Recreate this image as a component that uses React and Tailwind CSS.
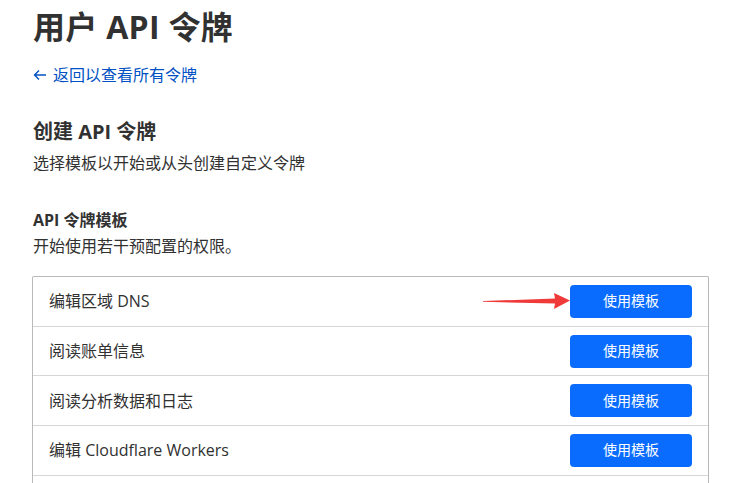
import React from "react";

const rows = ["编辑区域 DNS", "阅读账单信息", "阅读分析数据和日志", "编辑 Cloudflare Workers"];

export default function App() {
  return (
    <div
      className="w-[746px] h-[483px] overflow-hidden bg-white text-[#313131]"
      style={{ fontFamily: '"Open Sans", "Noto Sans CJK SC", sans-serif' }}
    >
      <div className="pl-[33px] pt-[7px] flex flex-col">
        <h1 className="text-[32px] leading-[40px] font-bold tracking-[0.3px] text-[#313131]">用户 API 令牌</h1>
        <a className="mt-[16px] flex items-center gap-[6px] text-[16px] leading-[24px] text-[#0051c3]">
          <svg width="14" height="12" viewBox="0 0 14 12" fill="none" stroke="#0051c3" strokeWidth="1.4">
            <path d="M13 6H1.5M6 1.5L1.5 6L6 10.5" />
          </svg>
          <span>返回以查看所有令牌</span>
        </a>
        <h2 className="mt-[31px] text-[20px] leading-[28px] font-bold">创建 API 令牌</h2>
        <p className="mt-[5px] text-[16px] leading-[24px]">选择模板以开始或从头创建自定义令牌</p>
        <h3 className="mt-[33px] text-[16px] leading-[24px] font-bold">API 令牌模板</h3>
        <p className="mt-[2px] text-[16px] leading-[24px]">开始使用若干预配置的权限。</p>
        <div className="mt-[18px] w-[677px] -ml-[1px] border-x border-t border-[#b9b9b9] rounded-t-[2px] relative">
          {rows.map((r, i) => (
            <div key={i} className="h-[49.7px] flex items-center justify-between pl-[16px] pr-[16px] border-b border-[#d6d6d6] relative">
              <span className="text-[16px] leading-[24px]">{r}</span>
              <button className="w-[122px] h-[33px] rounded-[4px] bg-[#0a6cff] text-white text-[14px] leading-[20px]">
                使用模板
              </button>
              {i === 0 && (
                <svg
                  className="absolute left-[450px] top-[15px]"
                  width="88"
                  height="18"
                  viewBox="0 0 88 18"
                >
                  <polygon points="0,9 72,6.5 71,1 87,8.5 71,17 72,11.5 0,9.8" fill="#f03a3a" />
                </svg>
              )}
            </div>
          ))}
          <div className="h-[20px]" />
        </div>
      </div>
    </div>
  );
}
